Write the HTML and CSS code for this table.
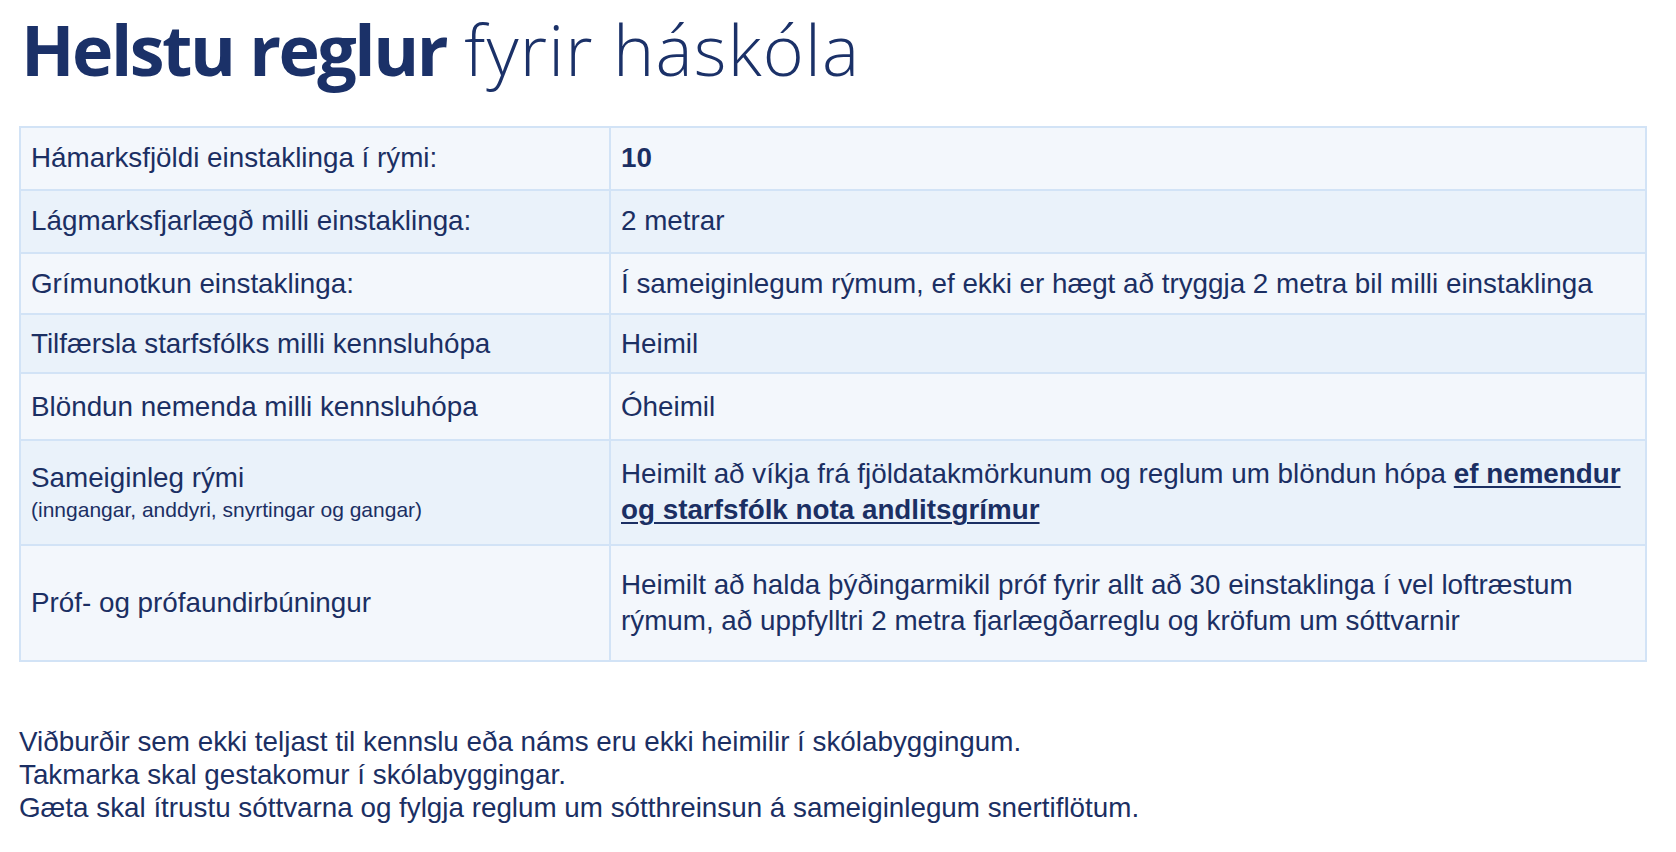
FILE: index.html
```html
<!DOCTYPE html>
<html lang="is">
<head>
<meta charset="utf-8">
<title>Helstu reglur fyrir háskóla</title>
<link rel="stylesheet" href="styles.css">
</head>
<body>
<main class="page">
  <h1 class="title"><strong>Helstu reglur</strong> <span class="light">fyrir háskóla</span></h1>
  <table class="rules">
    <tbody>
      <tr class="row odd">
        <td class="label">Hámarksfjöldi einstaklinga í rými:</td>
        <td class="value"><strong>10</strong></td>
      </tr>
      <tr class="row even">
        <td class="label">Lágmarksfjarlægð milli einstaklinga:</td>
        <td class="value">2 metrar</td>
      </tr>
      <tr class="row odd row-r3">
        <td class="label">Grímunotkun einstaklinga:</td>
        <td class="value">Í sameiginlegum rýmum, ef ekki er hægt að tryggja 2 metra bil milli einstaklinga</td>
      </tr>
      <tr class="row even row-r4">
        <td class="label">Tilfærsla starfsfólks milli kennsluhópa</td>
        <td class="value">Heimil</td>
      </tr>
      <tr class="row odd row-r5">
        <td class="label">Blöndun nemenda milli kennsluhópa</td>
        <td class="value">Óheimil</td>
      </tr>
      <tr class="row even row-mid">
        <td class="label">Sameiginleg rými<br><small class="note">(inngangar, anddyri, snyrtingar og gangar)</small></td>
        <td class="value">Heimilt að víkja frá fjöldatakmörkunum og reglum um blöndun hópa <a class="link" href="#">ef nemendur og starfsfólk nota andlitsgrímur</a></td>
      </tr>
      <tr class="row odd row-tall">
        <td class="label">Próf- og prófaundirbúningur</td>
        <td class="value">Heimilt að halda þýðingarmikil próf fyrir allt að 30 einstaklinga í vel loftræstum rýmum, að uppfylltri 2 metra fjarlægðarreglu og kröfum um sóttvarnir</td>
      </tr>
    </tbody>
  </table>
  <div class="notes">
    <p>Viðburðir sem ekki teljast til kennslu eða náms eru ekki heimilir í skólabyggingum.</p>
    <p>Takmarka skal gestakomur í skólabyggingar.</p>
    <p>Gæta skal ítrustu sóttvarna og fylgja reglum um sótthreinsun á sameiginlegum snertiflötum.</p>
  </div>
</main>
</body>
</html>
```

FILE: styles.css
```css
html, body {
  margin: 0;
  padding: 0;
  background: #ffffff;
}

body {
  color: #1b2f63;
  font-family: "Liberation Sans", Arial, sans-serif;
}

.page {
  padding: 14px 29px 0 19px;
}

.title {
  margin: 0 0 42px 2px;
  font-family: "Open Sans", "Noto Sans", sans-serif;
  font-size: 70px;
  line-height: 70px;
  font-weight: 300;
  color: #1b3168;
}

.title strong {
  font-weight: 700;
  letter-spacing: -2.5px;
}

.title .light {
  letter-spacing: 1.2px;
}

.rules {
  width: 100%;
  border-collapse: collapse;
  border: 2px solid #cde0f5;
  font-size: 27.8px;
  line-height: 36px;
}

.rules td {
  border: 2px solid #d2e3f6;
  padding: 12px 10px 13px;
  vertical-align: middle;
}

.label {
  width: 568px;
}

.row.odd {
  background: #f3f7fc;
}

.row.even {
  background: #eaf2fa;
}

.row-r3 td {
  padding-top: 12px;
  padding-bottom: 11px;
}

.row-r4 td {
  padding-top: 11px;
  padding-bottom: 10px;
}

.row-r5 td {
  padding-top: 15px;
  padding-bottom: 14px;
}

.row-mid td {
  padding-top: 15px;
  padding-bottom: 16px;
}

.row-tall td {
  padding-top: 21px;
  padding-bottom: 21px;
}

.value strong {
  font-weight: 700;
}

.note {
  display: block;
  font-size: 21px;
  line-height: 28px;
}

.link {
  color: #1b2f63;
  font-weight: 700;
  text-decoration: underline;
  text-decoration-thickness: 2px;
  text-underline-offset: 3px;
}

.notes {
  margin-top: 63px;
  font-size: 27.8px;
  line-height: 33px;
}

.notes p {
  margin: 0;
}
```
